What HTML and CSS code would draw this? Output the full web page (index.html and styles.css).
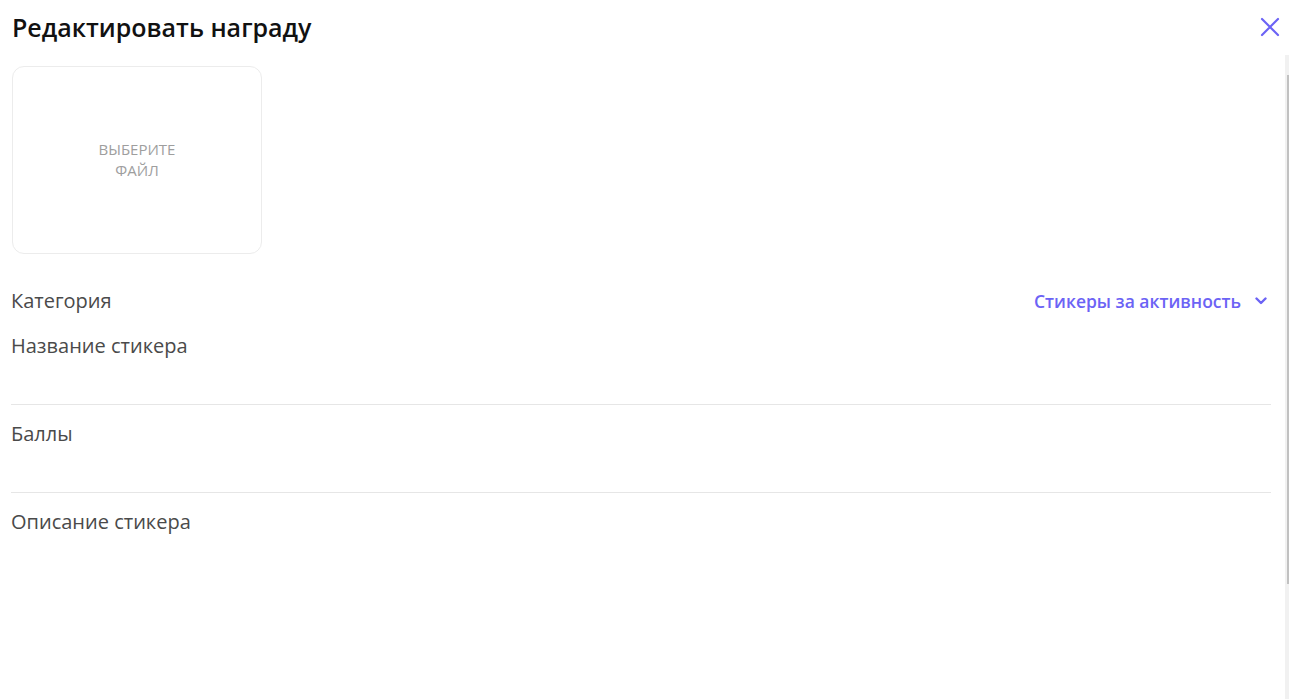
FILE: index.html
```html
<!DOCTYPE html>
<html lang="ru">
<head>
<meta charset="utf-8">
<title>Редактировать награду</title>
<link rel="stylesheet" href="styles.css">
</head>
<body>
<div class="modal">
  <header class="modal-header">
    <h1 class="modal-title">Редактировать награду</h1>
    <button class="close-btn" aria-label="Закрыть">
      <svg width="20" height="20" viewBox="0 0 20 20"><path d="M2 2 L18 18 M18 2 L2 18" stroke="#6c63f5" stroke-width="2.2" stroke-linecap="round" fill="none"/></svg>
    </button>
  </header>
  <div class="modal-body">
    <div class="content">
      <div class="upload">
        <span class="upload-text">Выберите<br>файл</span>
      </div>
      <div class="select-row">
        <span class="label">Категория</span>
        <span class="select-value">Стикеры за активность
          <svg class="chevron" width="12" height="8" viewBox="0 0 12 8"><path d="M1.5 1.5 L6 6 L10.5 1.5" stroke="#6c63f5" stroke-width="2.4" stroke-linecap="round" stroke-linejoin="round" fill="none"/></svg>
        </span>
      </div>
      <div class="field">
        <span class="label">Название стикера</span>
        <div class="input"></div>
      </div>
      <div class="field">
        <span class="label">Баллы</span>
        <div class="input"></div>
      </div>
      <div class="field">
        <span class="label">Описание стикера</span>
      </div>
    </div>
    <div class="scrollbar"><div class="thumb"></div></div>
  </div>
</div>
</body>
</html>
```

FILE: styles.css
```css
html, body {
  margin: 0;
  padding: 0;
  background: #ffffff;
}
body {
  font-family: "Open Sans", "Noto Sans", sans-serif;
  color: #4a4a4a;
}
.modal {
  width: 1289px;
  height: 699px;
  display: flex;
  flex-direction: column;
  overflow: hidden;
}
.modal-header {
  height: 55px;
  display: flex;
  align-items: center;
  justify-content: space-between;
  padding: 0 8px 0 12px;
  box-sizing: border-box;
}
.modal-title {
  margin: 0;
  font-size: 25px;
  font-weight: 600;
  color: #111111;
  line-height: 30px;
  margin-top: -1px;
}
.close-btn {
  border: 0;
  background: none;
  padding: 0;
  width: 20px;
  height: 20px;
  cursor: pointer;
  margin-right: 1px;
  margin-top: -2px;
}
.close-btn svg { display: block; }
.modal-body {
  flex: 1;
  display: flex;
  min-height: 0;
}
.content {
  flex: 1;
  padding: 11px 14px 0 11px;
}
.upload {
  width: 250px;
  height: 188px;
  box-sizing: border-box;
  margin-left: 1px;
  border: 1px solid #ececec;
  border-radius: 12px;
  display: flex;
  align-items: center;
  justify-content: center;
}
.upload-text {
  font-size: 15px;
  line-height: 21px;
  text-transform: uppercase;
  color: #9e9e9e;
  text-align: center;
}
.select-row {
  margin-top: 35px;
  display: flex;
  justify-content: space-between;
  align-items: center;
  height: 24px;
}
.label {
  font-size: 20px;
  line-height: 24px;
  color: #4a4a4a;
}
.select-value {
  display: flex;
  align-items: center;
  gap: 14px;
  font-size: 17.5px;
  font-weight: 600;
  color: #6c63f5;
  padding-right: 4px;
}
.chevron { display: block; }
.field {
  margin-top: 21px;
}
.field + .field {
  margin-top: 17px;
}
.field .label { display: block; }
.input {
  height: 46px;
  border-bottom: 1px solid #e6e6e6;
}
.scrollbar {
  width: 4px;
  background: #f1f1f1;
  display: flex;
  flex-direction: column;
  align-items: flex-end;
}
.thumb {
  width: 2px;
  height: 509px;
  margin-top: 20px;
  background: #c1c1c1;
}
```
